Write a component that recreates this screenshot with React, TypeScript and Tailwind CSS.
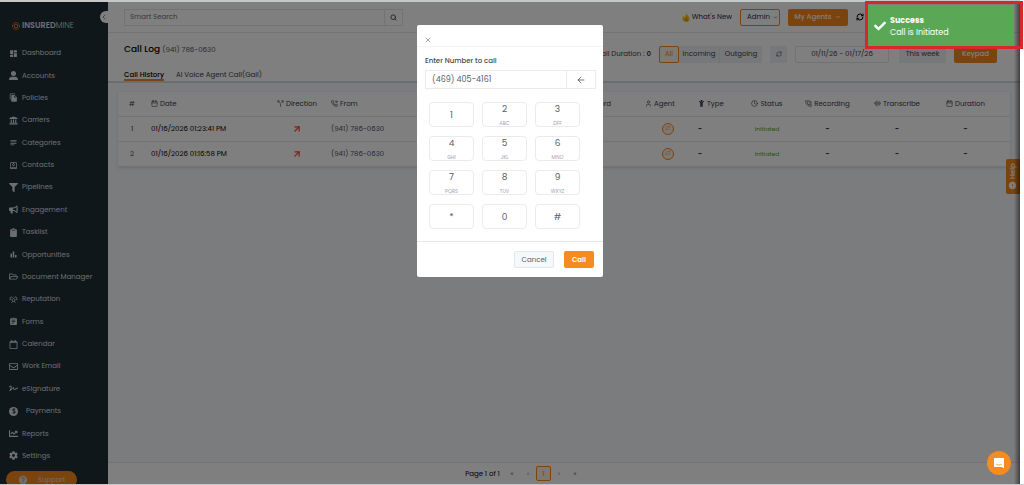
import type { ReactNode } from "react";
import type { IconType } from "react-icons";
import {
  FaBullhorn,
  FaChartLine,
  FaCheck,
  FaChild,
  FaClipboard,
  FaCog,
  FaDollarSign,
  FaFilter,
  FaRegCalendar,
  FaRegEnvelope,
  FaRegFolderOpen,
  FaSignature,
  FaUniversity,
} from "react-icons/fa";
import { FaUserLarge } from "react-icons/fa6";
import {
  MdAssignment,
  MdBarChart,
  MdDashboard,
  MdFileCopy,
  MdHelp,
  MdInfo,
  MdOutlineAccountBox,
  MdSubject,
} from "react-icons/md";
import { PiUsersThree } from "react-icons/pi";
import {
  ArrowLeft,
  ArrowUpRight,
  AudioLines,
  Calendar,
  ChevronDown,
  ChevronLeft,
  Clock,
  PhoneCall,
  PhoneForwarded,
  RefreshCw,
  Search,
  Split,
  User,
  X,
} from "lucide-react";

const NAV: { label: string; icon: IconType }[] = [
  { label: "Dashboard", icon: MdDashboard },
  { label: "Accounts", icon: FaUserLarge },
  { label: "Policies", icon: MdFileCopy },
  { label: "Carriers", icon: FaUniversity },
  { label: "Categories", icon: MdSubject },
  { label: "Contacts", icon: MdOutlineAccountBox },
  { label: "Pipelines", icon: FaFilter },
  { label: "Engagement", icon: FaBullhorn },
  { label: "Tasklist", icon: FaClipboard },
  { label: "Opportunities", icon: MdBarChart },
  { label: "Document Manager", icon: FaRegFolderOpen },
  { label: "Reputation", icon: PiUsersThree },
  { label: "Forms", icon: MdAssignment },
  { label: "Calendar", icon: FaRegCalendar },
  { label: "Work Email", icon: FaRegEnvelope },
  { label: "eSignature", icon: FaSignature },
  { label: "Payments", icon: FaDollarSign },
  { label: "Reports", icon: FaChartLine },
  { label: "Settings", icon: FaCog },
];

const CALLS = [
  { id: 1, date: "01/16/2026 01:23:41 PM", from: "(941) 786-0630" },
  { id: 2, date: "01/16/2026 01:16:58 PM", from: "(941) 786-0630" },
];

const KEYS = [
  { digit: "1" },
  { digit: "2", letters: "ABC" },
  { digit: "3", letters: "DFF" },
  { digit: "4", letters: "GHI" },
  { digit: "5", letters: "JKL" },
  { digit: "6", letters: "MNO" },
  { digit: "7", letters: "PQRS" },
  { digit: "8", letters: "TUV" },
  { digit: "9", letters: "WXYZ" },
  { digit: "*" },
  { digit: "0" },
  { digit: "#" },
];

function Sidebar() {
  return (
    <aside className="relative flex w-[108px] shrink-0 flex-col bg-[#1e2e34] text-[#d9dee0]">
      <div className="flex h-10 shrink-0 items-center gap-0.5 pt-2 pl-3 text-[8px]">
        <svg className="size-2 text-[#f0702a]" viewBox="0 0 16 16" fill="none" stroke="currentColor" strokeWidth={2}>
          <path d="M5 1.5h6M5 14.5h6M1.5 5v6M14.5 5v6M2.5 2.5l2 2M13.5 2.5l-2 2M2.5 13.5l2-2M13.5 13.5l-2-2" />
          <circle cx={8} cy={8} r={3.5} />
        </svg>
        <span>
          <b className="font-semibold">INSURED</b>
          <span className="font-light">MINE</span>
        </span>
      </div>
      <button
        type="button"
        aria-label="Collapse sidebar"
        className="absolute top-[9px] right-0 flex h-3 w-2 items-center justify-center rounded-l-full bg-white text-gray-600"
      >
        <ChevronLeft className="size-2" />
      </button>

      <nav className="flex min-h-0 flex-1 flex-col">
        {NAV.map(({ label, icon: Icon }) => (
          <a key={label} href="#" className="flex min-h-0 flex-1 items-center gap-1 pl-[9px]">
            {label === "Payments" ? (
              <span className="mr-1 flex size-[9px] items-center justify-center rounded-full bg-[#d9dee0] text-[#1e2e34]">
                <Icon className="size-1.5" />
              </span>
            ) : (
              <Icon className="size-[9px]" />
            )}
            {label}
          </a>
        ))}
      </nav>

      <div className="h-[17px] shrink-0 overflow-hidden pt-1 pl-1.5">
        <button
          type="button"
          className="flex h-[17px] w-[71px] items-center justify-center gap-2.5 rounded-full bg-[#f7861b] text-[#d9dee0]"
        >
          <MdHelp className="size-2.5" />
          Support
        </button>
      </div>
    </aside>
  );
}

function TopBar() {
  return (
    <header className="flex h-[31px] shrink-0 items-center border-b border-gray-200 pr-[156px] pl-4">
      <div className="flex h-[17px] w-[279px] border border-gray-200">
        <input
          type="search"
          aria-label="Smart Search"
          placeholder="Smart Search"
          className="min-w-0 flex-1 px-[5px] placeholder:text-gray-500"
        />
        <button type="button" aria-label="Search" className="flex w-[18px] items-center justify-center border-l border-gray-200 text-gray-700">
          <Search className="size-[7px]" strokeWidth={3} />
        </button>
      </div>
      <div className="ml-auto flex items-center gap-2">
        <a href="#" className="flex items-center gap-px text-[#222b44]">
          <svg className="size-[9px]" viewBox="0 0 16 16">
            <path fill="#ffc400" d="M7 0c1 3 5 5 6 9 2 4-2 7-5 7-5 0-8-3-7-7 0-2 1-3 2-4l1 3C6 6 7 4 7 0Z" />
            <path fill="#d8a000" d="M8 8c2 2 3 4 2 6-2 2-5 1-5-2 0-2 2-2 3-4Z" />
          </svg>
          What's New
        </a>
        <div className="relative">
          <select
            aria-label="Role"
            className="h-[17px] w-10 appearance-none rounded-xs border border-[#f7861b] pl-[6px] text-[#222b44]"
          >
            <option>Admin</option>
          </select>
          <ChevronDown className="pointer-events-none absolute top-1.5 right-0.5 size-[5px]" />
        </div>
        <button
          type="button"
          className="flex h-[17px] w-[60px] items-center justify-center gap-1 rounded-xs bg-[#f7861b] font-medium text-white"
        >
          My Agents
          <ChevronDown className="size-1.5" strokeWidth={3} />
        </button>
        <button type="button" aria-label="Refresh">
          <RefreshCw className="size-2" strokeWidth={3} />
        </button>
      </div>
    </header>
  );
}

function PageHeader() {
  return (
    <div className="shrink-0 border-b-2 border-[#d5d9dc] pr-[23px] pl-4">
      <div className="flex h-[30px] items-center">
        <h1 className="pt-0.5 text-[9px] font-medium text-black">
          Call Log <span className="text-[7px] font-normal text-gray-600">(941) 786-0630</span>
        </h1>
        <div className="ml-auto flex items-center gap-2 pt-3">
          <span className="text-gray-700">
            Call Duration : <b className="font-semibold">0</b>
          </span>
          <div className="flex h-[17px] bg-[#eef1f5] text-gray-700">
            <button type="button" className="w-5 rounded-xs border border-[#f7861b] bg-[#fff3e6] text-[#f7861b]">
              All
            </button>
            <button type="button" className="w-[41px] border-r border-gray-200">
              Incoming
            </button>
            <button type="button" className="w-[42px]">
              Outgoing
            </button>
          </div>
          <button type="button" aria-label="Reload calls" className="flex h-[17px] w-[17px] items-center justify-center bg-[#eef1f5] text-gray-700">
            <RefreshCw className="size-1.5" />
          </button>
          <input
            aria-label="Date range"
            defaultValue="01/11/26 - 01/17/26"
            className="h-[17px] w-[94px] rounded-xs border border-gray-200 text-center text-gray-700"
          />
          <button type="button" className="ml-0.5 h-[17px] w-[47px] bg-[#eef1f5] text-gray-700">
            This week
          </button>
          <button type="button" className="h-[17px] w-[43px] rounded-xs bg-[#f7861b] font-medium text-white">
            Keypad
          </button>
        </div>
      </div>
      <div className="flex gap-3">
        <button type="button" className="h-[18px] border-b-2 border-[#f7861b] pt-1.5 font-medium text-black">
          Call History
        </button>
        <button type="button" className="h-[18px] border-b-2 border-transparent pt-1.5 text-gray-700">
          AI Voice Agent Call(Gail)
        </button>
      </div>
    </div>
  );
}

function Th({ icon, children, className = "" }: { icon?: ReactNode; children: ReactNode; className?: string }) {
  return (
    <th scope="col" className={`font-normal ${className}`}>
      <span className="inline-flex items-center gap-0.5 align-middle">
        {icon}
        {children}
      </span>
    </th>
  );
}

function CallTable() {
  const icon = "size-[7px]";
  return (
    <table className="w-full table-fixed bg-white text-[#333d4a] shadow-sm">
      <thead>
        <tr className="h-6 border-b border-gray-200 text-left">
          <Th className="w-7 text-center">#</Th>
          <Th className="w-[127px] pl-[5px]" icon={<Calendar className={icon} />}>Date</Th>
          <Th className="w-12 text-center" icon={<Split className={icon} />}>Direction</Th>
          <Th className="pl-2.5" icon={<PhoneForwarded className={icon} />}>From</Th>
          <Th icon={<PhoneForwarded className={icon} />}>To</Th>
          <Th className="pr-4 text-right">Record</Th>
          <Th className="w-[66px] text-center" icon={<User className={icon} />}>Agent</Th>
          <Th className="w-[43px] pl-[5px]" icon={<FaChild className={icon} />}>Type</Th>
          <Th className="w-[62px] text-center" icon={<Clock className={icon} />}>Status</Th>
          <Th className="w-[59px] text-center" icon={<PhoneCall className={icon} />}>Recording</Th>
          <Th className="w-20 text-center" icon={<AudioLines className={icon} />}>Transcribe</Th>
          <Th className="w-[73px] pr-4 text-center" icon={<Calendar className={icon} />}>Duration</Th>
        </tr>
      </thead>
      <tbody>
        {CALLS.map((call) => (
          <tr key={call.id} className="h-[25px] border-b border-gray-200">
            <td className="text-center">{call.id}</td>
            <td className="pl-[5px] text-black">{call.date}</td>
            <td>
              <ArrowUpRight className="mx-auto size-2.5 text-[#ff3b30]" strokeWidth={3} />
            </td>
            <td className="pl-2.5 text-gray-600">{call.from}</td>
            <td />
            <td />
            <td className="pl-4">
              <span className="mx-auto flex size-3 items-center justify-center rounded-full border border-[#f7861b] bg-[#fff0e0] text-[5px] text-[#f7861b]">
                LT
              </span>
            </td>
            <td className="pl-[5px] font-bold">-</td>
            <td className="text-center text-[6px] text-[#52a814]">Initiated</td>
            <td className="text-center font-bold">-</td>
            <td className="text-center font-bold">-</td>
            <td className="pr-4 text-center font-bold">-</td>
          </tr>
        ))}
      </tbody>
    </table>
  );
}

function Pagination() {
  const step = "w-4 text-gray-500";
  return (
    <footer className="flex h-[22px] shrink-0 items-center justify-center border-t border-gray-200 bg-white pr-20">
      <span className="mr-1 text-black">Page 1 of 1</span>
      <button type="button" className={step}>&laquo;</button>
      <button type="button" className={step}>&lsaquo;</button>
      <button type="button" className="h-[15px] w-[15px] rounded-xs border border-[#f7861b] bg-[#fff0e0] text-[#f7861b]">
        1
      </button>
      <button type="button" className={step}>&rsaquo;</button>
      <button type="button" className={step}>&raquo;</button>
    </footer>
  );
}

function DialerModal() {
  return (
    <div
      role="dialog"
      aria-label="Keypad"
      className="pointer-events-auto absolute top-[25px] left-1/2 w-[186px] -translate-x-1/2 rounded-xs bg-white text-[#565d66]"
    >
      <div className="flex h-[22px] items-end border-b border-gray-100 pb-0.5 pl-[7px]">
        <button type="button" aria-label="Close" className="text-gray-500">
          <X className="size-2" />
        </button>
      </div>
      <div className="pt-2 pr-[7px] pb-3 pl-2">
        <label htmlFor="number" className="block h-[15px] font-medium text-[#3f4650]">
          Enter Number to call
        </label>
        <div className="flex h-[19px]">
          <input
            id="number"
            type="tel"
            defaultValue="(469) 405-4161"
            className="min-w-0 flex-1 border border-[#e9ebee] px-1.5 text-[8px]"
          />
          <button type="button" aria-label="Delete digit" className="flex w-[29px] items-center justify-center border border-l-0 border-[#e9ebee]">
            <ArrowLeft className="size-2.5" />
          </button>
        </div>
        <div className="grid grid-cols-[45px_45px_45px] gap-x-2 gap-y-[9px] pt-[13px] pl-1">
          {KEYS.map(({ digit, letters }) => (
            <button
              key={digit}
              type="button"
              className="flex h-[25px] flex-col items-center justify-center rounded-sm border border-[#e9ebee] text-[9px] leading-3"
            >
              {digit}
              {letters && <span className="pt-1.5 text-[5px] leading-[6px] text-gray-400">{letters}</span>}
            </button>
          ))}
        </div>
      </div>
      <div className="flex h-9 items-center justify-end gap-2.5 border-t border-gray-200 pr-[9px]">
        <button type="button" className="h-[17px] w-10 rounded-xs border border-gray-200 bg-[#f6f9fc]">
          Cancel
        </button>
        <button type="button" className="h-[17px] w-[30px] rounded-xs bg-[#f68b1f] font-semibold text-white">
          Call
        </button>
      </div>
    </div>
  );
}

function Toast() {
  return (
    <div className="absolute top-px right-px w-[158px] border-[3px] border-[#d9262c] pt-px">
      <div role="status" className="mr-1.5 flex h-[41px] items-center gap-1 bg-[#5aa856] pl-1.5 text-[8px] text-white">
        <FaCheck className="size-3" />
        <p className="pt-0.5">
          <b className="block font-bold">Success</b>
          Call is Initiated
        </p>
      </div>
    </div>
  );
}

export default function App() {
  return (
    <div className="relative h-dvh overflow-hidden border-b border-[#c4c8c8] bg-white pr-1 font-['Poppins','Inter',sans-serif] text-[7px] leading-3">
      <div className="relative flex h-full border-t-2 border-[#c4c8c8]">
        <Sidebar />
        <main className="flex min-w-0 flex-1 flex-col bg-white">
          <TopBar />
          <PageHeader />
          <div className="min-h-0 flex-1 bg-[#f7f8fb] px-2.5 pt-[9px]">
            <CallTable />
          </div>
          <Pagination />
        </main>

        <button
          type="button"
          className="absolute top-[157px] right-0 flex h-[35px] w-3.5 rotate-180 items-center justify-center gap-0.5 rounded-r-xs bg-[#f7861b] font-medium text-white [writing-mode:vertical-rl]"
        >
          <MdInfo className="size-[9px]" />
          Help
        </button>

        {/* Dimmed backdrop, darker towards the right edge */}
        <div className="absolute inset-0 bg-black/50" />
        <div className="absolute inset-y-0 right-0 w-1.5 bg-linear-to-r from-transparent to-black/50" />

        <button
          type="button"
          aria-label="Open chat"
          className="absolute right-[9px] bottom-[9px] flex size-6 items-center justify-center rounded-full bg-[#f68b1f]"
        >
          <svg className="size-3" viewBox="0 0 24 24">
            <path fill="#fff" d="M3 2h18a1 1 0 0 1 1 1v20l-4-3H3a1 1 0 0 1-1-1V3a1 1 0 0 1 1-1Z" />
            <path d="M6 14c3 2.500 9 2.500 12 0" fill="none" stroke="#f68b1f" strokeWidth={1.5} />
          </svg>
        </button>
      </div>
      <div className="pointer-events-none absolute inset-y-0 right-1 left-0">
        <DialerModal />
      </div>
      <Toast />
    </div>
  );
}
